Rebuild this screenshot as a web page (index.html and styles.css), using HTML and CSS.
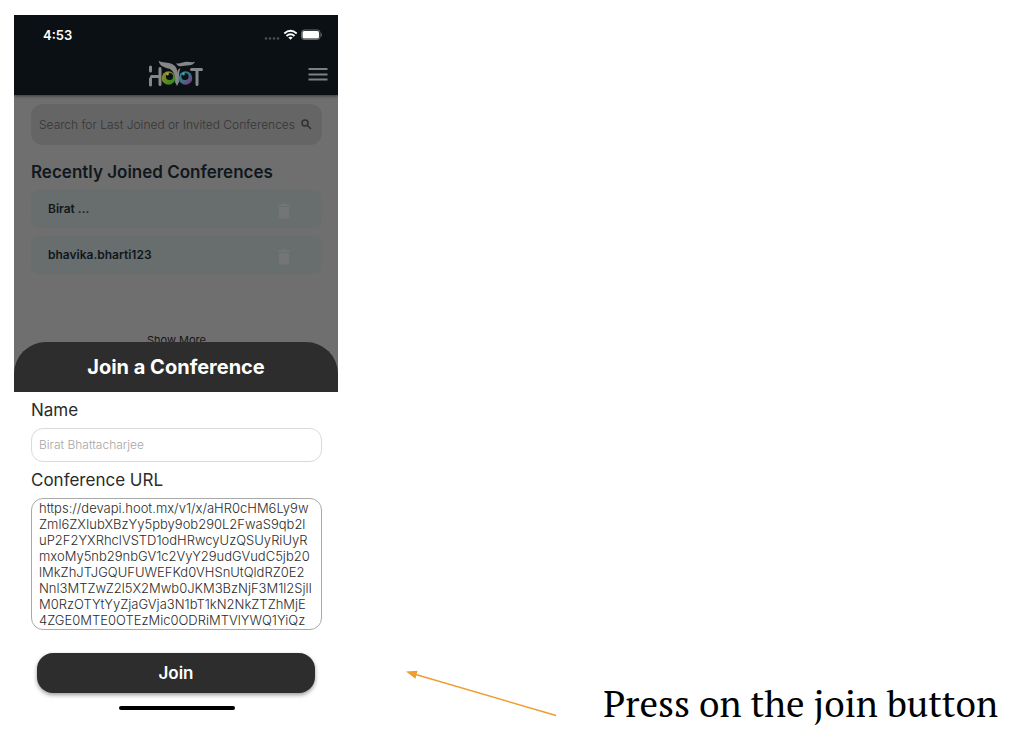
FILE: index.html
```html
<!DOCTYPE html>
<html lang="en">
<head>
<meta charset="utf-8">
<meta name="viewport" content="width=device-width, initial-scale=1">
<title>Join a Conference</title>
<link rel="stylesheet" href="styles.css">
</head>
<body>
<main class="slide">
  <section class="phone">
    <header class="topbar">
      <div class="status">
        <span class="clock">4:53</span>
        <svg class="status-icons" width="58" height="12" viewBox="0 0 58 12" aria-hidden="true">
          <g fill="#4a5053"><circle cx="2" cy="9.500" r="1.300"/><circle cx="6" cy="9.500" r="1.300"/><circle cx="10" cy="9.500" r="1.300"/><circle cx="14" cy="9.500" r="1.300"/></g>
          <g fill="none" stroke="#fff" stroke-width="1.900"><path d="M20.300 4.400Q26.500-.8 32.700 4.400"/><path d="M22.500 6.900Q26.500 3.600 30.500 6.900"/></g>
          <path d="M24.300 8.400Q26.500 6.900 28.700 8.400L26.500 10.800Z" fill="#fff"/>
          <rect x="37.500" y="1" width="18.500" height="9.500" rx="2.500" fill="none" stroke="#666b6e"/>
          <rect x="38.500" y="2" width="16.500" height="7.500" rx="1.500" fill="#fff"/>
          <path d="M57.300 4.300v3" stroke="#666b6e"/>
        </svg>
      </div>
      <div class="brand-row">
        <svg class="logo" width="56" height="28" viewBox="0 0 56 28" role="img" aria-label="Hoot">
          <defs>
            <linearGradient id="iris-left" x1="0" y1="0" x2="1" y2="1"><stop offset=".2" stop-color="#8e8820"/><stop offset=".8" stop-color="#398a23"/></linearGradient>
            <linearGradient id="iris-right" x1="0" y1="0" x2="1" y2="1"><stop offset=".35" stop-color="#29828b"/><stop offset=".9" stop-color="#83387d"/></linearGradient>
          </defs>
          <g stroke="#858788" stroke-width="3" stroke-linecap="round" fill="none">
            <path d="M2.500 7v4M2.500 18.500v6.500M3.500 16.500h8M12 8.500v16"/>
            <path d="M43.500 9.500h10M49 10v14.500"/>
          </g>
          <circle cx="20.500" cy="18" r="6.800" fill="url(#iris-left)"/>
          <circle cx="21.500" cy="16.500" r="3.600" fill="#0a1013"/>
          <circle cx="37.500" cy="18" r="6.800" fill="url(#iris-right)"/>
          <circle cx="37" cy="16.500" r="3.600" fill="#0a1013"/>
          <circle cx="19.500" cy="14" r="1.400" fill="#a5a64c"/><circle cx="35.500" cy="14" r="1.400" fill="#579da2"/>
          <path d="M10.500 .8C14.500 3 20 2.200 24.500 4.200C28 6 29.300 9 29.500 13C29.500 9.500 31 8.500 32.500 8.500C30.500 12 31 19 31 22L29 26L27 22C28 16 25.500 11 22 9C17 7.500 12 7 10.500 .8Z" fill="#858788"/>
          <path d="M28 3.200C32 4 34 2.200 38 1.800C41 1.500 44 3 47 1.800C45 6 41 5.200 37 5.800C33 6.500 30 7 28 3.200Z" fill="#858788"/>
        </svg>
        <button class="menu" type="button" aria-label="Menu">
          <svg width="20" height="14" viewBox="0 0 20 14"><path d="M.5 2h19M.5 7.500h19M.5 12.500h19" stroke="#7d8082" stroke-width="2"/></svg>
        </button>
      </div>
    </header>

    <div class="home">
      <div class="search">
        <input class="search-input" type="text" aria-label="Search conferences" placeholder="Search for Last Joined or Invited Conferences">
        <svg width="11" height="11" viewBox="0 0 11 11" fill="none" stroke="#303030" stroke-width="1.500" aria-hidden="true"><circle cx="4" cy="4" r="3"/><path d="M6.300 6.300L10 10"/></svg>
      </div>
      <h2 class="section-title">Recently Joined Conferences</h2>
      <ul class="recent">
        <li class="card"><span>Birat ...</span>
          <button class="trash" type="button" aria-label="Delete Birat"><svg width="12" height="16" viewBox="0 0 12 16" fill="#747675"><path d="M0 1.500h3.500L4.500 .5h3l1 1H12V3H0ZM1 4h10v10.500q0 1-1 1H2q-1 0-1-1Z"/></svg></button></li>
        <li class="card"><span>bhavika.bharti123</span>
          <button class="trash" type="button" aria-label="Delete bhavika.bharti123"><svg width="12" height="16" viewBox="0 0 12 16" fill="#747675"><path d="M0 1.500h3.500L4.500 .5h3l1 1H12V3H0ZM1 4h10v10.500q0 1-1 1H2q-1 0-1-1Z"/></svg></button></li>
      </ul>
      <button class="more" type="button">Show More</button>
    </div>

    <form class="sheet">
      <h1 class="sheet-title">Join a Conference</h1>
      <div class="fields">
        <label class="label" for="name">Name</label>
        <input class="field" id="name" type="text" placeholder="Birat Bhattacharjee">
        <label class="label" for="url">Conference URL</label>
        <div class="url-box"><textarea class="url" id="url" rows="8" spellcheck="false">https://devapi.hoot.mx/v1/x/aHR0cHM6Ly9w
Zml6ZXIubXBzYy5pby9ob290L2FwaS9qb2l
uP2F2YXRhclVSTD1odHRwcyUzQSUyRiUyR
mxoMy5nb29nbGV1c2VyY29udGVudC5jb20
lMkZhJTJGQUFUWEFKd0VHSnUtQldRZ0E2
Nnl3MTZwZ2l5X2Mwb0JKM3BzNjF3M1l2SjlI
M0RzOTYtYyZjaGVja3N1bT1kN2NkZTZhMjE
4ZGE0MTE0OTEzMic0ODRiMTVlYWQ1YiQz</textarea></div>
        <button class="join" type="button">Join</button>
        <div class="home-bar"></div>
      </div>
    </form>
  </section>

  <aside class="note">
    <svg class="arrow" width="152" height="48" viewBox="0 0 152 48" aria-hidden="true">
      <path d="M8 4L150 45.500" stroke="#ee9d30" stroke-width="1.500"/>
      <path d="M0 1.500L11.500 .8L9.500 8.800Z" fill="#ee9d30"/>
    </svg>
    <p class="caption">Press on the join button</p>
  </aside>
</main>
</body>
</html>
```
FILE: styles.css
```css
* { box-sizing: border-box; }

body {
  margin: 0;
  background: #fff;
  font-family: Inter, "Liberation Sans", sans-serif;
}

button, input, textarea {
  margin: 0;
  padding: 0;
  border: 0;
  background: none;
  font: inherit;
  color: inherit;
}

svg { display: block; flex: none; }

.slide {
  display: flex;
  align-items: stretch;
  padding: 15px 14px;
}

.phone {
  flex: 0 0 324px;
  background: #6f6f6f;
}

.topbar {
  padding: 12px 10px 5px 29px;
  background: #0a1013;
  box-shadow: 0 1px 3px rgba(0, 0, 0, .5);
  clip-path: inset(0 0 -6px);
}

.status {
  display: flex;
  align-items: center;
  justify-content: space-between;
  padding-right: 6px;
  line-height: 16px;
}

.clock { color: #fff; font-size: 13px; font-weight: 600; }

.brand-row {
  display: grid;
  grid-template-columns: 1fr auto 1fr;
  align-items: center;
  margin-left: -19px;
  padding-top: 15px;
  height: 47px;
}

.logo { grid-column: 2; }
.menu { justify-self: end; }

.home { padding: 9px 16px 0 17px; }

.search {
  display: flex;
  align-items: center;
  height: 41px;
  padding: 0 10px 0 8px;
  border-radius: 12px;
  background: #656565;
}

.search-input {
  flex: 1;
  min-width: 0;
  font-size: 12px;
  font-weight: 300;
  outline: 0;
}

.search-input::placeholder { color: #353535; opacity: 1; }

.section-title {
  margin: 17px 0 7px;
  color: #10171d;
  font-size: 17px;
  font-weight: 600;
  line-height: 21px;
}

.recent {
  display: grid;
  gap: 8px;
  margin: 0;
  padding: 0;
  list-style: none;
}

.card {
  display: flex;
  justify-content: space-between;
  height: 38px;
  padding: 11px 32px 0 17px;
  border-radius: 8px;
  background: #686e6d;
  color: #10171d;
  font-size: 12px;
  font-weight: 600;
  line-height: 16px;
}

.trash { height: 16px; margin-top: 2px; }

.more {
  display: block;
  height: 16px;
  margin: 58px auto 0;
  color: #151515;
  font-size: 11px;
  line-height: 16px;
}

.sheet {
  position: relative;
  margin-top: -6px;
}

.sheet-title {
  margin: 0;
  border-radius: 32px 32px 0 0;
  background: #2d2d2d;
  color: #fff;
  font-size: 20px;
  font-weight: 700;
  line-height: 50px;
  text-align: center;
}

.fields {
  display: flex;
  flex-direction: column;
  padding: 8px 16px 15px 17px;
  background: #fff;
}

.label {
  margin-bottom: 7px;
  color: #2b2b2b;
  font-size: 17px;
  font-weight: 400;
  line-height: 21px;
}

.field {
  height: 34px;
  margin-bottom: 8px;
  padding: 0 7px 2px;
  border: 1px solid #d9d9d9;
  border-radius: 12px;
  font-size: 12px;
  font-weight: 300;
}

.field::placeholder { color: #a6a6a6; opacity: 1; }

.url-box {
  padding: 1px 4px 1px 7px;
  border: 1px solid #a9a9a9;
  border-radius: 12px;
}

.url {
  display: block;
  width: 100%;
  height: 128px;
  color: #2b2b2b;
  font-size: 13px;
  font-weight: 300;
  line-height: 16px;
  white-space: pre;
  overflow: hidden;
  resize: none;
}

.join {
  height: 40px;
  margin: 23px 7px 13px 6px;
  border-radius: 16px;
  background: #2d2d2d;
  box-shadow: 0 2px 4px rgba(0, 0, 0, .4);
  color: #fff;
  font-size: 17px;
  font-weight: 600;
}

.home-bar {
  width: 116px;
  height: 4px;
  margin: 0 auto;
  border-radius: 2px;
  background: #000;
}

.note {
  display: flex;
  flex: 1;
  align-items: flex-end;
  justify-content: space-between;
  padding: 0 10px 0 68px;
}

.arrow { margin-bottom: 7px; }

.caption {
  margin: 0;
  color: #000;
  font-family: "PT Serif", "Noto Serif", "Liberation Serif", serif;
  font-size: 37px;
  line-height: 42px;
  white-space: nowrap;
}
```
